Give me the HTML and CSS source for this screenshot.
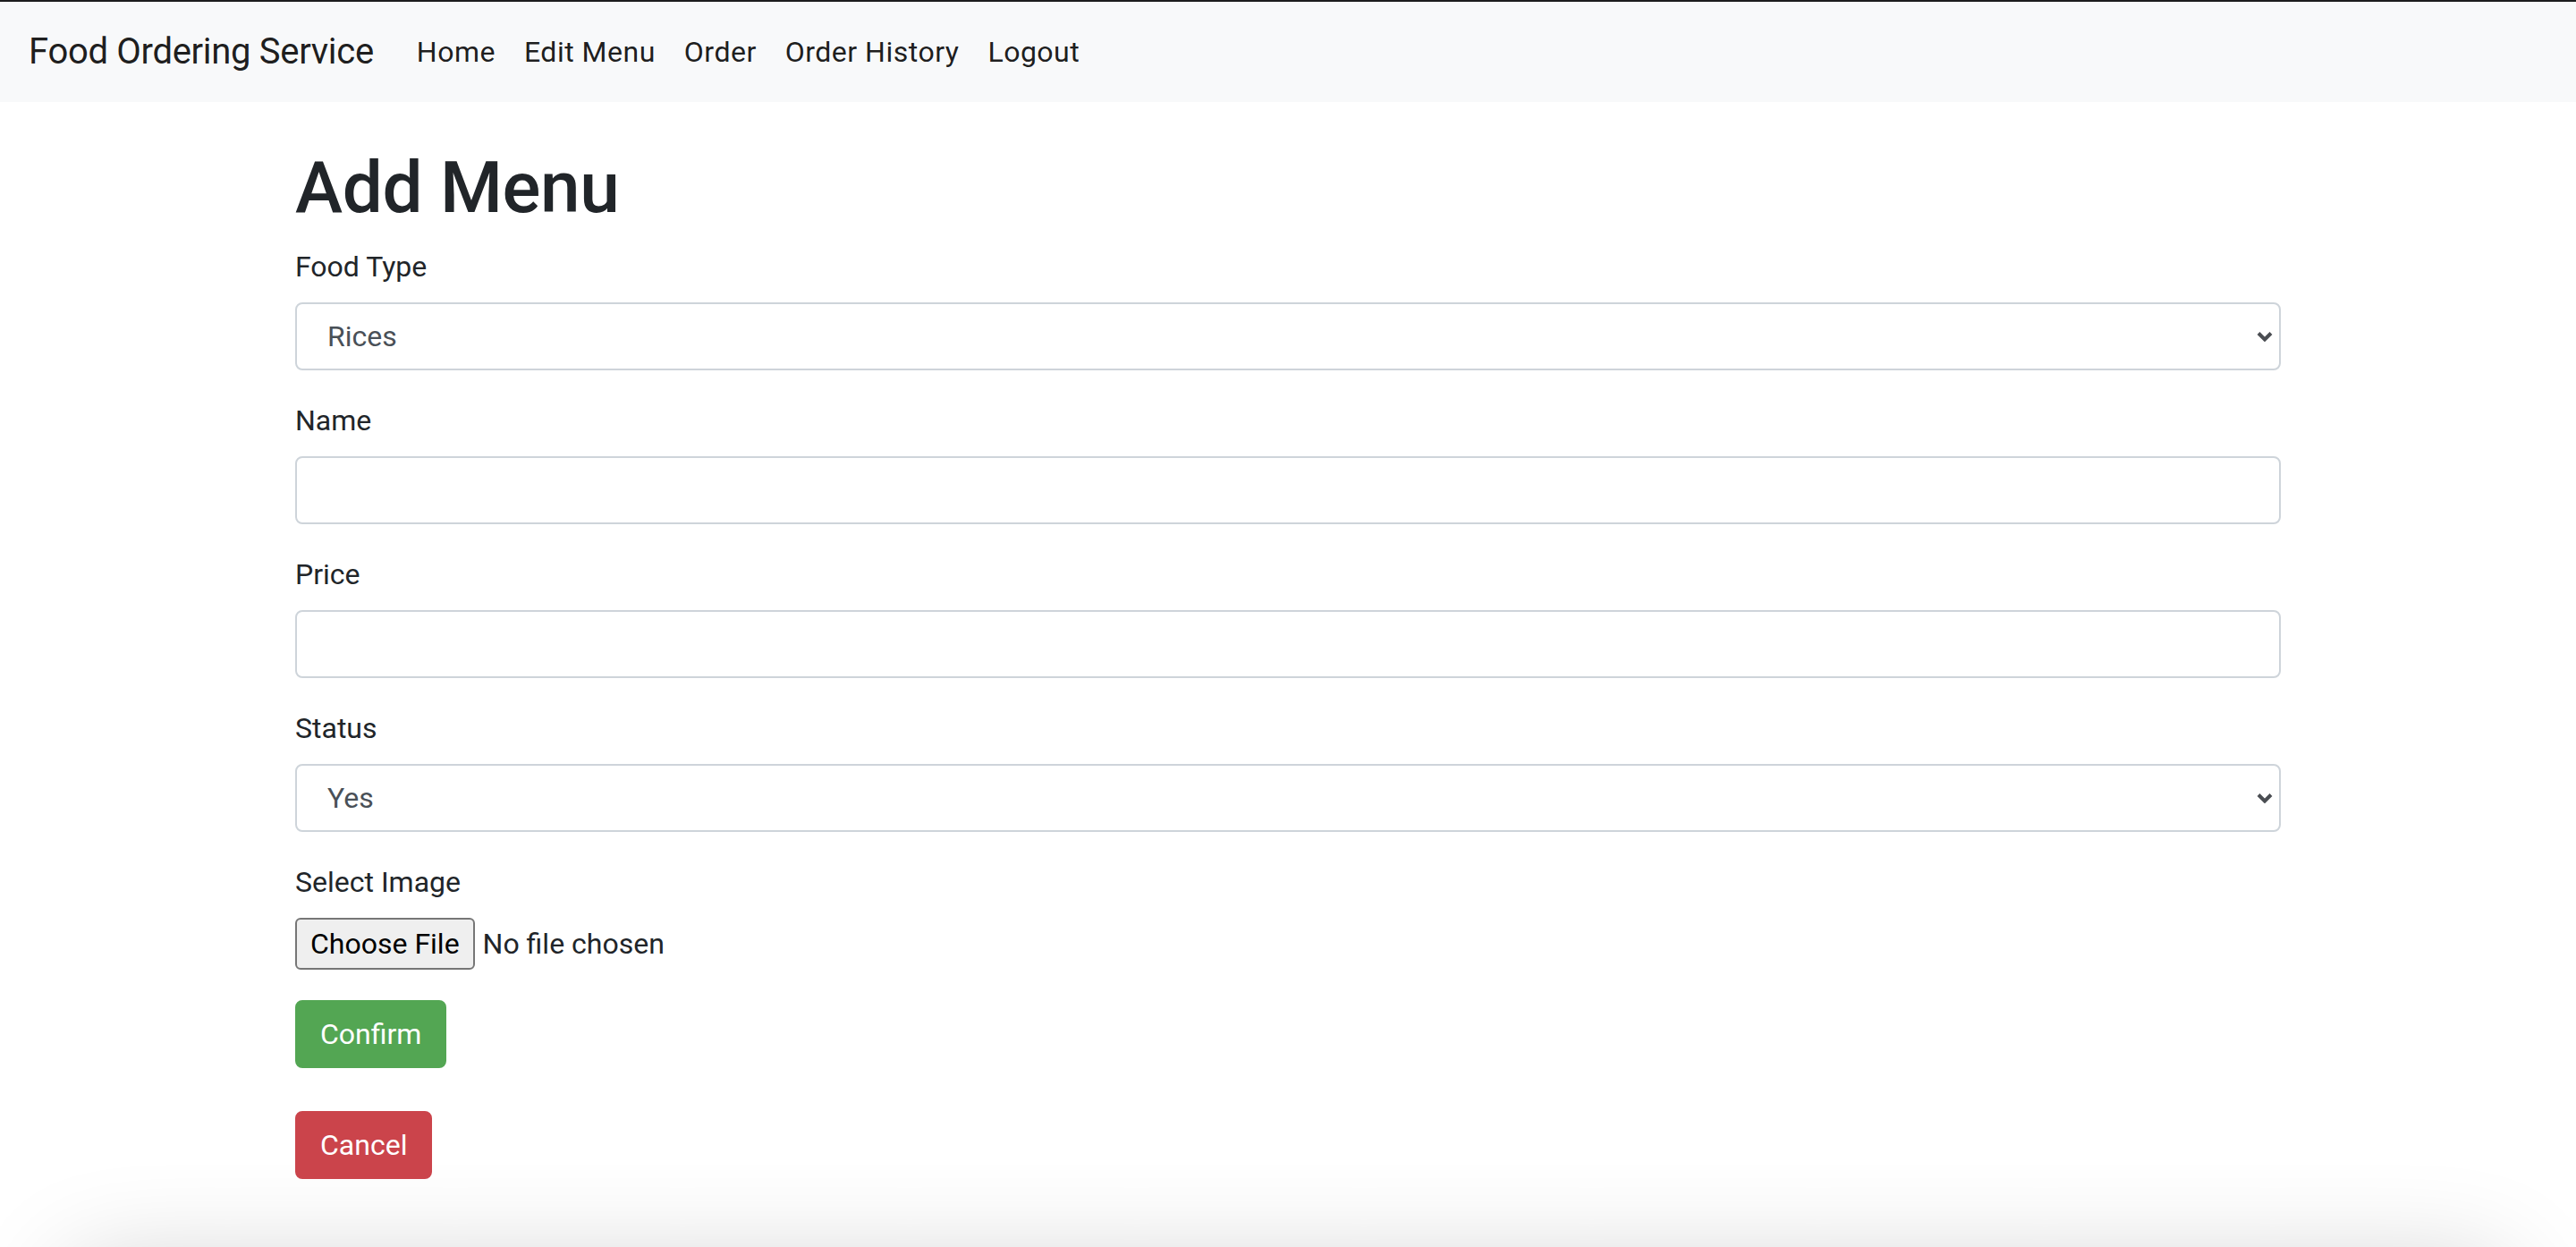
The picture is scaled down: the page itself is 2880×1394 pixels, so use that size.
FILE: index.html
```html
<!DOCTYPE html>
<html lang="en">
<head>
<meta charset="utf-8">
<title>Add Menu - Food Ordering Service</title>
<link rel="stylesheet" href="styles.css">
</head>
<body>
<nav class="navbar">
  <a class="brand" href="#">Food Ordering Service</a>
  <ul class="nav">
    <li><a class="nav-link" href="#">Home</a></li>
    <li><a class="nav-link" href="#">Edit Menu</a></li>
    <li><a class="nav-link" href="#">Order</a></li>
    <li><a class="nav-link" href="#">Order History</a></li>
    <li><a class="nav-link" href="#">Logout</a></li>
  </ul>
</nav>
<main class="container">
  <h1 class="title">Add Menu</h1>
  <form class="menu-form">
    <div class="form-group">
      <label class="label" for="foodType">Food Type</label>
      <div class="select-wrap">
        <select class="form-control select" id="foodType">
          <option>Rices</option>
          <option>Noodles</option>
          <option>Drinks</option>
        </select>
        <svg class="chevron" viewBox="0 0 18 12" width="18" height="12" aria-hidden="true"><polyline points="2,2.5 9,9.5 16,2.5" fill="none" stroke="#4a4d52" stroke-width="4"/></svg>
      </div>
    </div>
    <div class="form-group">
      <label class="label" for="name">Name</label>
      <input class="form-control" type="text" id="name">
    </div>
    <div class="form-group">
      <label class="label" for="price">Price</label>
      <input class="form-control" type="text" id="price">
    </div>
    <div class="form-group">
      <label class="label" for="status">Status</label>
      <div class="select-wrap">
        <select class="form-control select" id="status">
          <option>Yes</option>
          <option>No</option>
        </select>
        <svg class="chevron" viewBox="0 0 18 12" width="18" height="12" aria-hidden="true"><polyline points="2,2.5 9,9.5 16,2.5" fill="none" stroke="#4a4d52" stroke-width="4"/></svg>
      </div>
    </div>
    <div class="form-group">
      <label class="label" for="image">Select Image</label>
      <input class="file-input" type="file" id="image">
    </div>
    <button class="btn btn-confirm" type="submit">Confirm</button>
  </form>
  <a class="btn btn-cancel" href="#">Cancel</a>
</main>
<div class="bottom-shade"></div>
</body>
</html>
```
FILE: styles.css
```css
* {
  box-sizing: border-box;
}

html, body {
  margin: 0;
  padding: 0;
}

body {
  font-family: Roboto, "Liberation Sans", Arial, sans-serif;
  font-size: 32px;
  line-height: 1.5;
  color: #212529;
  background: #ffffff;
  overflow: hidden;
}

.navbar {
  display: flex;
  align-items: center;
  height: 114px;
  padding: 16px 32px;
  background: #f8f9fa;
  border-top: 2px solid #1c1c1e;
}

.brand {
  font-size: 40px;
  line-height: 60px;
  padding: 10px 0;
  margin-right: 32px;
  color: rgba(0, 0, 0, 0.9);
  text-decoration: none;
  white-space: nowrap;
  letter-spacing: -0.3px;
}

.nav {
  display: flex;
  list-style: none;
  margin: 0;
  padding: 0;
}

.nav-link {
  display: block;
  padding: 16px;
  font-size: 32px;
  line-height: 48px;
  color: rgba(0, 0, 0, 0.9);
  text-decoration: none;
  letter-spacing: 0.5px;
}

.container {
  width: 2280px;
  margin: 0 auto;
  padding: 48px 30px 0;
}

.title {
  margin: 0 0 16px;
  font-size: 80px;
  font-weight: 500;
  line-height: 96px;
  color: #212529;
  letter-spacing: -0.3px;
}

.form-group {
  margin-bottom: 32px;
}

.label {
  display: block;
  margin-bottom: 16px;
  line-height: 48px;
}

.form-control {
  display: block;
  width: 100%;
  height: 76px;
  padding: 12px 24px;
  font-family: inherit;
  font-size: 32px;
  line-height: 48px;
  color: #495057;
  background: #ffffff;
  border: 2px solid #ced4da;
  border-radius: 8px;
  outline: none;
}

.select-wrap {
  position: relative;
}

.select {
  appearance: none;
  -webkit-appearance: none;
  padding-left: 34px;
}

.chevron {
  position: absolute;
  right: 9px;
  top: 50%;
  transform: translateY(-50%);
  pointer-events: none;
}

.file-input {
  display: block;
  height: 60px;
  font-family: inherit;
  font-size: 32px;
  line-height: 58px;
  color: #212529;
}

.file-input::file-selector-button {
  height: 58px;
  margin: 0 9px 0 0;
  padding: 0 15px;
  font-family: inherit;
  font-size: 32px;
  color: #000000;
  background: #efefef;
  border: 2px solid #767676;
  border-radius: 6px;
}

.btn {
  display: inline-block;
  padding: 12px 26px;
  font-family: inherit;
  font-size: 32px;
  line-height: 48px;
  color: #ffffff;
  text-align: center;
  text-decoration: none;
  border: 2px solid transparent;
  border-radius: 8px;
  cursor: pointer;
}

.btn-confirm {
  background: #53a653;
  border-color: #53a653;
  margin-bottom: 48px;
}

.btn-cancel {
  background: #cb444b;
  border-color: #cb444b;
}

.bottom-shade {
  height: 240px;
  margin: 100px 80px 0;
  background: #f0f0f0;
  box-shadow: 0 0 120px rgba(0, 0, 0, 0.2);
}
```
